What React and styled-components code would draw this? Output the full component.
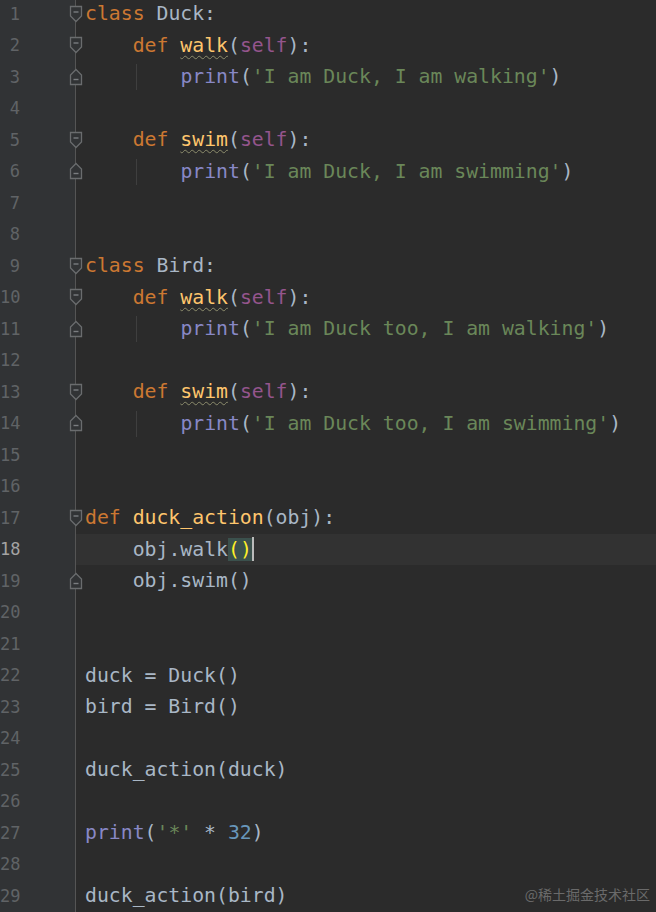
import React from 'react';
import styled, { createGlobalStyle } from 'styled-components';

const GlobalStyle = createGlobalStyle`
  html, body {
    margin: 0;
    padding: 0;
    background: #2b2b2b;
    overflow: hidden;
  }
`;

// token colours (Darcula)
const C = {
  kw: '#cc7832',
  fn: '#ffc66d',
  self: '#94558d',
  builtin: '#8888c6',
  str: '#6a8759',
  num: '#6897bb',
  text: '#a9b7c6',
};

const Editor = styled.div`
  position: relative;
  width: 656px;
  height: 912px;
  overflow: hidden;
  background: linear-gradient(to right, #313335 0, #313335 75px, #2b2b2b 75px);
  font-family: 'DejaVu Sans Mono', 'Liberation Mono', monospace;
`;

const Lines = styled.div`
  margin-top: -2px;
`;

const Row = styled.div`
  display: flex;
  align-items: center;
  height: 31.5px;
  background: ${(p) => (p.$current ? 'linear-gradient(to right, transparent 0, transparent 75px, #323232 75px)' : 'transparent')};
`;

const Num = styled.span`
  width: 20px;
  flex: none;
  text-align: right;
  font-family: 'DejaVu Sans Mono', monospace;
  font-size: 17px;
  color: ${(p) => (p.$current ? '#a4a3a3' : '#606366')};
`;

const Spacer = styled.span`
  width: 48px;
  flex: none;
`;

const FoldCol = styled.span`
  width: 15px;
  height: 100%;
  flex: none;
  display: flex;
  align-items: center;
  justify-content: center;
  background: linear-gradient(#555555, #555555) no-repeat 7px 0 / 1px 100%;
`;

const Code = styled.span`
  padding-left: 2px;
  font-size: 19.8px;
  white-space: pre;
  color: ${C.text};
  display: flex;
  align-items: center;
  height: 100%;
`;

const Indent = styled.span`
  display: inline-block;
  width: 47.7px;
  height: 100%;
  background: ${(p) => (p.$guide ? 'linear-gradient(#3f3f3f, #3f3f3f) no-repeat 3px 3px / 1px 26px' : 'none')};
`;

const T = styled.span`
  color: ${(p) => p.$c || C.text};
  text-decoration: ${(p) => (p.$typo ? 'underline wavy #8c8c6c 1px' : 'none')};
  text-underline-offset: 3px;
`;

const Match = styled.span`
  color: #ffef28;
  background: #3b514d;
`;

const Caret = styled.span`
  display: inline-block;
  width: 2px;
  height: 24px;
  background: #bbbbbb;
`;

const Watermark = styled.div`
  position: absolute;
  right: 6px;
  bottom: 8px;
  font-family: 'Noto Sans CJK SC', 'Noto Sans', sans-serif;
  font-size: 14px;
  color: #6a6a6a;
`;

const FoldMark = ({ type }) => (
  <svg width="14" height="18" viewBox="0 0 14 18">
    {type === 'open' ? (
      <path d="M1.5 1.5 H12.5 V11 L7 16.5 L1.5 11 Z" fill="#313335" stroke="#6a6c6e" strokeWidth="1.3" />
    ) : (
      <path d="M7 1.5 L12.5 7 V16.5 H1.5 V7 Z" fill="#313335" stroke="#6a6c6e" strokeWidth="1.3" />
    )}
    <path d={type === 'open' ? 'M4.5 7 H9.5' : 'M4.5 11.5 H9.5'} stroke="#7a7d80" strokeWidth="1.4" />
  </svg>
);

const def = (name) => [
  { i: 1 },
  { t: 'def ', c: C.kw },
  { t: name, c: C.fn, typo: true },
  { t: '(' },
  { t: 'self', c: C.self },
  { t: '):' },
];

const pr = (s) => [
  { i: 1 },
  { i: 1, guide: true },
  { t: 'print', c: C.builtin },
  { t: '(' },
  { t: `'${s}'`, c: C.str },
  { t: ')' },
];

const lines = [
  { fold: 'open', parts: [{ t: 'class ', c: C.kw }, { t: 'Duck:' }] },
  { fold: 'open', parts: def('walk') },
  { fold: 'close', parts: pr('I am Duck, I am walking') },
  {},
  { fold: 'open', parts: def('swim') },
  { fold: 'close', parts: pr('I am Duck, I am swimming') },
  {},
  {},
  { fold: 'open', parts: [{ t: 'class ', c: C.kw }, { t: 'Bird:' }] },
  { fold: 'open', parts: def('walk') },
  { fold: 'close', parts: pr('I am Duck too, I am walking') },
  {},
  { fold: 'open', parts: def('swim') },
  { fold: 'close', parts: pr('I am Duck too, I am swimming') },
  {},
  {},
  { fold: 'open', parts: [{ t: 'def ', c: C.kw }, { t: 'duck_action', c: C.fn }, { t: '(obj):' }] },
  { current: true, parts: [{ i: 1 }, { t: 'obj.walk' }, { match: '()' }, { caret: true }] },
  { fold: 'close', parts: [{ i: 1 }, { t: 'obj.swim()' }] },
  {},
  {},
  { parts: [{ t: 'duck = Duck()' }] },
  { parts: [{ t: 'bird = Bird()' }] },
  {},
  { parts: [{ t: 'duck_action(duck)' }] },
  {},
  { parts: [{ t: 'print', c: C.builtin }, { t: '(' }, { t: "'*'", c: C.str }, { t: ' * ' }, { t: '32', c: C.num }, { t: ')' }] },
  {},
  { parts: [{ t: 'duck_action(bird)' }] },
];

const Part = ({ p }) => {
  if (p.i) return <Indent $guide={p.guide} />;
  if (p.match) return <Match>{p.match}</Match>;
  if (p.caret) return <Caret />;
  return (
    <T $c={p.c} $typo={p.typo}>
      {p.t}
    </T>
  );
};

export default function App() {
  return (
    <>
      <GlobalStyle />
      <Editor>
        <Lines>
          {lines.map((l, n) => (
            <Row key={n} $current={l.current}>
              <Num $current={l.current}>{n + 1}</Num>
              <Spacer />
              <FoldCol>{l.fold && <FoldMark type={l.fold} />}</FoldCol>
              <Code>
                {(l.parts || []).map((p, k) => (
                  <Part key={k} p={p} />
                ))}
              </Code>
            </Row>
          ))}
        </Lines>
        <Watermark>@稀土掘金技术社区</Watermark>
      </Editor>
    </>
  );
}
